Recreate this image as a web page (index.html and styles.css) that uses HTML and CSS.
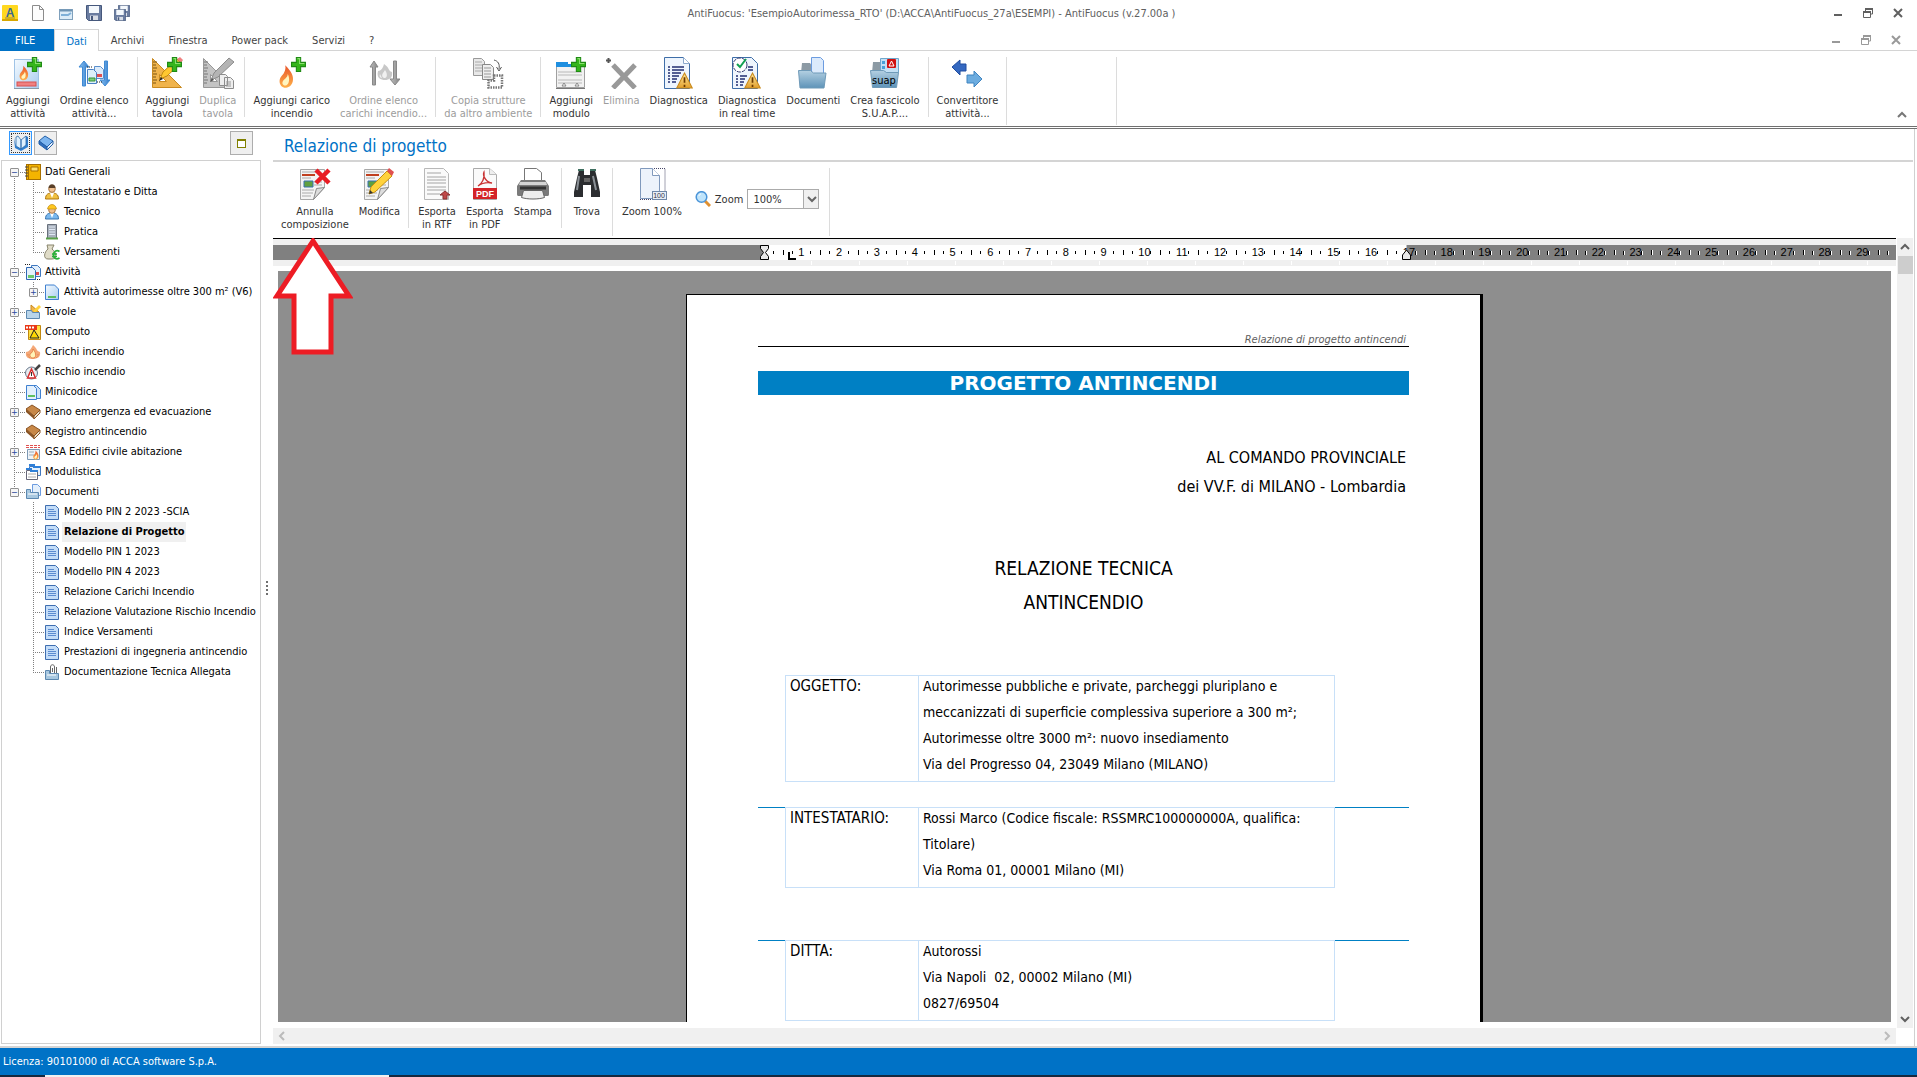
FILE: index.html
```html
<!DOCTYPE html>
<html lang="it">
<head>
  <meta charset="UTF-8">
  <title>AntiFuocus</title>
  <meta name="viewport" content="width=device-width, initial-scale=1">
  <link rel="stylesheet" href="styles.css">
</head>
<body>

  <!-- Icone -->
  <svg class="sprite" aria-hidden="true">
    <defs>
      <linearGradient id="g-blue" x1="0" y1="0" x2="1" y2="1"><stop offset="0" stop-color="#f4faff"/><stop offset="1" stop-color="#a9cdf0"/></linearGradient>
      <linearGradient id="g-folder" x1="0" y1="0" x2="0" y2="1"><stop offset="0" stop-color="#b4d0e2"/><stop offset="1" stop-color="#5e93b8"/></linearGradient>
      <linearGradient id="g-gold" x1="0" y1="0" x2="0" y2="1"><stop offset="0" stop-color="#ffe9a0"/><stop offset="1" stop-color="#e2a02c"/></linearGradient>
      <linearGradient id="g-fire" x1="0" y1="0" x2="0" y2="1"><stop offset="0" stop-color="#e8542a"/><stop offset="1" stop-color="#ffb24a"/></linearGradient>
      <linearGradient id="g-arrow" x1="0" y1="0" x2="1" y2="0"><stop offset="0" stop-color="#8cc4f4"/><stop offset="1" stop-color="#2f78c8"/></linearGradient>
      <linearGradient id="g-gray" x1="0" y1="0" x2="1" y2="0"><stop offset="0" stop-color="#c0c0c0"/><stop offset="1" stop-color="#848484"/></linearGradient>
    </defs>

    <symbol id="plus" viewBox="0 0 14 14"><path d="M5 .5h4V5h4.500v4H9v4.500H5V9H.5V5H5z" fill="#35b51c" stroke="#1f8a14"/><path d="M6 1.500h2V6h4.500" fill="none" stroke="#8be070"/></symbol>
    <symbol id="warn" viewBox="0 0 16 16"><path d="M8 1l7.300 14H.7z" fill="url(#g-gold)" stroke="#c98a1c"/><path d="M8 5v5M8 12v2" stroke="#6b3a00" stroke-width="1.600"/></symbol>
    <symbol id="flame" viewBox="0 0 12 20"><path d="M5 1c5 5 7 9 6 13s-4 5-6 5-5-2-4.500-6C1 10 3 9 4 7c1-2 1.500-4 1-6z" fill="url(#g-fire)"/><path d="M7 8c2 4 1 8-1 9s-4-1-3-3 4-3 4-6z" fill="#fff6c0"/></symbol>

    <symbol id="i-add-activity" viewBox="0 0 32 32">
      <rect x="2.500" y="2.500" width="24" height="29" fill="url(#g-blue)" stroke="#9fc3e6"/><path d="M2 31.500h25" stroke="#8a9aa8"/>
      <rect x="5" y="25" width="19" height="4" fill="#f08080" stroke="#d85050"/><use href="#flame" x="7" y="8" width="10" height="16"/><use href="#plus" x="15" y="0" width="15" height="15"/>
    </symbol>
    <symbol id="i-sort-activity" viewBox="0 0 32 32">
      <path d="M4.500 29V10H1L6 4l5 6H7.500v19z" fill="url(#g-arrow)" stroke="#3f8ad4"/><path d="M26.500 4v19H22l5 6 5-6h-2.500V4z" fill="url(#g-arrow)" stroke="#3f8ad4"/>
      <path d="M9 10h6M17 25h7" stroke="#222" stroke-dasharray="1 1"/><path d="M16.500 9.500h6l3 3v9h-9z" fill="#dcebfa" stroke="#5a8fcc"/><path d="M18 17h6v3h-6z" fill="#e05050"/>
      <path d="M9.500 12.500h6l3 3v11h-9z" fill="#dcf0fa" stroke="#4a80c4"/><path d="M11 21h6v3h-6z" fill="#7bd07b" stroke="#389038"/>
    </symbol>
    <symbol id="i-add-table" viewBox="0 0 32 32">
      <path d="M1.500 1.500v29h29z" fill="#f0b44c" stroke="#c98a20"/><path d="M8.500 17.500v7h7z" fill="#fff" stroke="#c98a20"/><path d="M2 5h4M2 8h3M2 11h4M2 14h3M2 17h4M2 20h3M2 23h4M2 26h3" stroke="#7a5410"/>
      <path d="M9 22l3-7L26 2l4 4-14 13z" fill="#ffc830" stroke="#c08a10"/><path d="M26 2l3-2 3 3-2 3z" fill="#f08080"/><path d="M8 24l2-4 2 2z" fill="#222"/><use href="#plus" x="16" y="0" width="15" height="15"/>
    </symbol>
    <symbol id="i-dup-table" viewBox="0 0 32 32">
      <path d="M1.500 1.500v29h29z" fill="#c4c4c4" stroke="#989898"/><path d="M8.500 17.500v7h7z" fill="#fff" stroke="#989898"/><path d="M2 5h4M2 8h3M2 11h4M2 14h3M2 17h4M2 20h3M2 23h4M2 26h3" stroke="#777"/>
      <path d="M9 23l3-7L27 1l5 4-16 15z" fill="#b4b4b4" stroke="#8c8c8c"/><path d="M8 25l2-4 2 2z" fill="#555"/><path d="M17.500 17.500h6l2 2v9h-8zM22.500 20.500h6l3 3v8h-9z" fill="#eee" stroke="#8c8c8c"/><path d="M24 25h5M24 27h5M24 29h5" stroke="#999"/>
    </symbol>
    <symbol id="i-add-fire" viewBox="0 0 32 32"><use href="#flame" x="3" y="7" width="15" height="25"/><use href="#plus" x="15" y="0" width="15" height="15"/></symbol>
    <symbol id="i-sort-fire" viewBox="0 0 32 32">
      <path d="M4.500 28V10H2l4-6 4 6H7.500v18z" fill="url(#g-gray)" stroke="#888"/><path d="M25.500 4v18H22l5 6 5-6h-3.500V4z" fill="url(#g-gray)" stroke="#888"/>
      <path d="M16 7c6 4 4 7 8 8 1 6-3 8-7 8s-9-2-7-9c3 0 5-3 6-7z" fill="#c8c8c8"/><path d="M17 13c3 4 2 8 0 8s-4-2-2-5zM12 17c-1 2 0 4 2 4z" fill="#f0f0f0"/>
    </symbol>
    <symbol id="i-copy" viewBox="0 0 32 32">
      <path d="M1.500 1.500h8l3 3v14h-11z" fill="#e8e8e8" stroke="#999"/><path d="M3 5h7M3 8h7M3 11h7M3 14h7" stroke="#aaa"/><path d="M10.500 7.500h8l3 3v12h-11z" fill="#eee" stroke="#888"/><path d="M12 11h7M12 14h7M12 17h7M12 20h7" stroke="#999"/>
      <path d="M22 3c4 1 6 4 5 9M24.500 10l2.500 4 2.500-4" fill="none" stroke="#555"/><path d="M22 18.500h8v12H16.500v-7H22z" fill="none" stroke="#777" stroke-width="2.500" stroke-dasharray="1.500 1"/>
    </symbol>
    <symbol id="i-add-form" viewBox="0 0 32 32">
      <path d="M1.500 7.500h28v23h-28z" fill="#f2f2f2" stroke="#a0a0a0"/><path d="M1 5h12v2h17v3H1z" fill="#1f8fe0"/><path d="M3 15h24M3 18h24M3 23h24M3 26h24" stroke="#b8b8b8"/><path d="M7 29l2-3 2 3zM20 29l2-3 2 3z" fill="#fff" stroke="#888"/><path d="M1 31.500h29" stroke="#777"/>
      <use href="#plus" x="16" y="0" width="15" height="15"/>
    </symbol>
    <symbol id="i-delete" viewBox="0 0 32 32"><path d="M1 3.500h5M3.500 1v5" stroke="#555" stroke-width="2"/><path d="M8 8l22 23M30 8L8 31" stroke="#999" stroke-width="5"/></symbol>
    <symbol id="i-diag" viewBox="0 0 32 32">
      <path d="M1.500.5h19l6 6v25h-25z" fill="#eef5fd" stroke="#3f6ea8"/><path d="M20.500.5v6h6" fill="#fff" stroke="#8aa8cc"/><path d="M5 10h2M5 13h2M5 16h2M5 19h2M5 22h2M5 25h2M9 10h12M9 13h12M9 16h9M9 19h7M9 22h5M9 25h4" stroke="#222e70" stroke-width="1.300"/><use href="#warn" x="13" y="15" width="17" height="17"/>
    </symbol>
    <symbol id="i-diag-rt" viewBox="0 0 32 32">
      <path d="M1.500.5h19l6 6v25h-25z" fill="#eef5fd" stroke="#3f6ea8"/><path d="M5 19h2M5 22h2M5 25h2M5 28h2M17 10h5M17 13h5M9 19h7M9 22h5M9 25h4M9 28h3" stroke="#222e70" stroke-width="1.300"/>
      <circle cx="9" cy="8" r="7" fill="#fff" stroke="#333c70" stroke-dasharray="4 1"/><path d="M6 7l3 3 6-8" fill="none" stroke="#12a050" stroke-width="2"/><use href="#warn" x="13" y="15" width="17" height="17"/>
    </symbol>
    <symbol id="i-docs" viewBox="0 0 32 32">
      <path d="M4 16l1-10h8l2 3v7z" fill="#8c9aa4"/><path d="M14.500.5h9l3 3v16h-12z" fill="#dceafb" stroke="#6c9ce0"/><path d="M1.500 13.500h12l3 2.500h12.500l-2 15h-24z" fill="url(#g-folder)" stroke="#6f9ab8"/>
    </symbol>
    <symbol id="i-suap" viewBox="0 0 32 32">
      <path d="M3 16l1-11h8v11z" fill="#8c9aa4"/><path d="M11.500 1.500h18v14h-18z" fill="#c4e0f4" stroke="#6fa6cc"/><path d="M13 4h3v3h-3zM13 9h3v3h-3z" fill="#4aa0d8"/><rect x="18" y="2" width="9" height="9" rx="1" fill="#d01010"/><path d="M20 9l2.500-5L25 9z" fill="none" stroke="#fff"/>
      <path d="M1.500 13.500h13l3 2h12l-2 15h-24z" fill="url(#g-folder)" stroke="#6f9ab8"/>
    </symbol>
    <symbol id="i-convert" viewBox="0 0 32 32"><path d="M1 10l8-7v4h6v7H9v4z" fill="#3468c0" stroke="#1f4ca0"/><path d="M31 22l-8-8v4h-7v8h7v4z" fill="#6cacdf" stroke="#3f84c0"/></symbol>

    <!-- barra del documento -->
    <symbol id="sheet-news" viewBox="0 0 32 32"><path d="M1.500 1.500h24v18l-11 12h-13z" fill="#f4f4f4" stroke="#a8a8a8"/><path d="M3 4h18M3 7h9M3 10h9M15 14h8M15 17h8M3 22h12M3 25h11M3 28h9" stroke="#aaa"/><path d="M3 7h13" stroke="#c04020" stroke-width="2"/><path d="M5 13h9v6H5z" fill="#60a040" stroke="#3870b0"/><path d="M14.500 31.500l3-11 8-1z" fill="#ddd" stroke="#888"/></symbol>
    <symbol id="i-cancel" viewBox="0 0 32 32"><use href="#sheet-news" x="0" y="0" width="32" height="32"/><path d="M17 2l13 13M30 2L17 15" stroke="#e81c24" stroke-width="4.500"/></symbol>
    <symbol id="i-edit" viewBox="0 0 32 32"><use href="#sheet-news" x="0" y="0" width="32" height="32"/><path d="M6 26l2-7L24 3l5 5-17 16z" fill="#ffd23c" stroke="#c89010"/><path d="M24 3l2-3 5 4-2 4z" fill="#e05050"/><path d="M6 26l1-4 3 3z" fill="#333"/></symbol>
    <symbol id="i-rtf" viewBox="0 0 32 32"><path d="M3.500.5h19l5 5v26h-24z" fill="#fafafa" stroke="#b8b8b8"/><path d="M6 5h14M6 9h19M6 12h19M6 15h19M6 19h19M6 22h19M6 26h13" stroke="#a4a4a4"/><path d="M24 23l5 4h-3v4h-4v-4h-3z" fill="#c04848" stroke="#883030"/></symbol>
    <symbol id="i-pdf" viewBox="0 0 32 32"><path d="M4.500.5h16l7 6v25h-23z" fill="#fafafa" stroke="#aaa"/><path d="M20.500.5v6h7" fill="#eee" stroke="#bbb"/><rect x="4" y="20" width="24" height="11" fill="#d42428"/><path d="M9 18c4-2 7-8 6-14-2 4 3 11 8 11-5-1-10 0-14 3z" fill="none" stroke="#c83030" stroke-width="1.300"/></symbol>
    <symbol id="i-print" viewBox="0 0 32 32"><path d="M7.500 14V.5h12l5 4V14z" fill="#fff" stroke="#777"/><path d="M4 12h24l4 6v8c0 2-1 2-2 2H2c-1 0-2 0-2-2v-8z" fill="#7a7a7a"/><path d="M3 14h26l1 3H2z" fill="#d4d4d4"/><path d="M3 20h26" stroke="#333" stroke-width="3"/><path d="M6.500 22.500h19l2 7c-6 2-17 2-23 0z" fill="#eee" stroke="#666"/></symbol>
    <symbol id="i-find" viewBox="0 0 32 32"><path d="M8 2h5v5h6V2h5l2 8 3 14v5h-9V17h-8v12H3v-5L6 10z" fill="#2b2d30"/><path d="M8 8l-2 14M22 8l3 14" stroke="#8a9096" stroke-width="2"/><path d="M7 2h6M19 2h6" stroke="#3f6f60" stroke-width="2"/><path d="M13 10h6v4h-6z" fill="#666"/></symbol>
    <symbol id="i-zoom100" viewBox="0 0 32 32"><path d="M4.500.5h12l7 7v23h-19z" fill="#edf3fb" stroke="#8099bc"/><path d="M16.500.5v7h7" fill="#fff" stroke="#8099bc"/><path d="M18 .5h11V24M4 31.500h12" fill="none" stroke="#446" stroke-dasharray="1 1"/><rect x="16.500" y="23.500" width="14" height="8" fill="#e8eef6" stroke="#7088a8"/></symbol>
    <symbol id="i-lens" viewBox="0 0 16 16"><path d="M10 10l5 5" stroke="#e09030" stroke-width="3"/><circle cx="6.500" cy="6" r="5.300" fill="#bfe4fb" stroke="#4a94d8" stroke-width="1.500"/><path d="M4 5c0-1 1-2 2-2" stroke="#fff" fill="none"/></symbol>

    <!-- barra del titolo -->
    <symbol id="q-app" viewBox="0 0 16 16"><rect width="16" height="16" rx="1" fill="#ffd820"/><path d="M0 14h16v2H0z" fill="#d8a800"/><path d="M3 13h10" stroke="#a08a30"/></symbol>
    <symbol id="q-new" viewBox="0 0 16 16"><path d="M2.500.5h7l4 4v11h-11z" fill="#fdfdfd" stroke="#8c8c8c"/><path d="M9.500.5v4h4" fill="none" stroke="#8c8c8c"/></symbol>
    <symbol id="q-open" viewBox="0 0 16 16"><rect x="1.500" y="4.500" width="13" height="10" fill="#dcecf8" stroke="#7fa0bc"/><path d="M2 5.500h12" stroke="#6e94b4" stroke-width="2"/><path d="M3 10h7l3-2" fill="none" stroke="#7fb0d8" stroke-width="2"/></symbol>
    <symbol id="q-save" viewBox="0 0 16 16"><path d="M.5.5h15v15h-13l-2-2z" fill="#6a7ca0" stroke="#46587c"/><path d="M3 1h10v7H3z" fill="#f4f8fc"/><path d="M4 10.500h8V15H4z" fill="#d8dde6"/><path d="M5 11h2v4H5z" fill="#46587c"/></symbol>
    <symbol id="q-save-all" viewBox="0 0 16 16"><use href="#q-save" x="4" y="0" width="12" height="12"/><use href="#q-save" x="0" y="4" width="12" height="12"/></symbol>
    <symbol id="w-min" viewBox="0 0 10 10"><path d="M1 7h8" stroke="currentColor" stroke-width="2"/></symbol>
    <symbol id="w-restore" viewBox="0 0 10 10"><path d="M2.500 3V1h7v5H8M.5 4h7v5.500h-7z" fill="none" stroke="currentColor"/><path d="M2 1h8M0 4h8" stroke="currentColor" stroke-width="2"/></symbol>
    <symbol id="w-close" viewBox="0 0 10 10"><path d="M1 1l8 8M9 1L1 9" stroke="currentColor" stroke-width="2"/></symbol>
    <symbol id="c-up" viewBox="0 0 10 10"><path d="M1 7l4-4 4 4" fill="none" stroke="currentColor" stroke-width="2"/></symbol>
    <symbol id="c-down" viewBox="0 0 10 10"><path d="M1 3l4 4 4-4" fill="none" stroke="currentColor" stroke-width="2"/></symbol>
    <symbol id="c-left" viewBox="0 0 10 10"><path d="M7 1L3 5l4 4" fill="none" stroke="currentColor" stroke-width="2"/></symbol>
    <symbol id="c-right" viewBox="0 0 10 10"><path d="M3 1l4 4-4 4" fill="none" stroke="currentColor" stroke-width="2"/></symbol>

    <!-- albero -->
    <symbol id="t-open-book" viewBox="0 0 16 16"><path d="M1 3l1 10 6 3 7-4V2l-2-1v9l-5 3-5-2z" fill="#2f7fd0"/><path d="M3 2l2-1 3 4v9l-5-3zM8 5l5-4v9l-5 4z" fill="#dff0fd" stroke="#2868a8" stroke-width=".8"/></symbol>
    <symbol id="t-book" viewBox="0 0 16 16"><path d="M1 6l6-5 8 5-6 6z" fill="#7db6f0" stroke="#2460a8"/><path d="M1 6v3l8 6v-3z" fill="#2f6fc0" stroke="#2460a8"/><path d="M9 12v3l6-6V6z" fill="#e8f2fc" stroke="#2460a8"/></symbol>
    <symbol id="t-general" viewBox="0 0 16 16"><rect x="1.500" y=".5" width="14" height="15" fill="#f4b400" stroke="#a87000"/><path d="M3.500 1v14" stroke="#a87000"/><path d="M6 3h7v4H6z" fill="#ffe070" stroke="#a87000"/><path d="M0 3h3M0 6h3M0 9h3M0 12h3" stroke="#444"/></symbol>
    <symbol id="t-person" viewBox="0 0 16 16"><path d="M1.500 15c0-5 3-6 6.500-6s6.500 1 6.500 6z" fill="#f0c040" stroke="#b07810"/><path d="M6 9l2 5 2-5z" fill="#fff"/><circle cx="8" cy="5" r="3.300" fill="#f0c090" stroke="#a87848"/><path d="M4.500 4c0-5 7-5 7 0z" fill="#5a4028"/></symbol>
    <symbol id="t-tech" viewBox="0 0 16 16"><path d="M1.500 15c0-5 3-6 6.500-6s6.500 1 6.500 6z" fill="#7ab8ee" stroke="#3874b0"/><path d="M6 9l2 5 2-5z" fill="#fff"/><circle cx="8" cy="6" r="3.300" fill="#f0c090" stroke="#a87848"/><path d="M3.500 5c1-6 8-6 9 0z" fill="#ffc820" stroke="#c08a10" stroke-width=".7"/></symbol>
    <symbol id="t-building" viewBox="0 0 16 16"><path d="M3.500.5h9v14h-9z" fill="#a8b0bc" stroke="#68707c"/><path d="M5 3h6M5 5.500h6M5 8h6M5 10.500h6" stroke="#dfe8f4"/><path d="M2 14.500h12" stroke="#58a048" stroke-width="2"/></symbol>
    <symbol id="t-money" viewBox="0 0 16 16"><path d="M3 1h7L8 5c5 4 5 10 0 10H4C-1 15 0 8 4 5z" fill="#e0dcc8" stroke="#88846c"/><path d="M15.500 7.500c-3-2-6 0-6 3.500s3 5 6 3M8 10h5M8 12.500h5" fill="none" stroke="#28b038" stroke-width="1.700"/></symbol>
    <symbol id="t-activity" viewBox="0 0 16 16"><path d="M0 .5h6M10 15.500h6" stroke="#222" stroke-dasharray="1 1"/><path d="M6.500 1.500h6l3 3v8h-9z" fill="#e4f0fc" stroke="#3f78c0"/><path d="M11 8h3v3h-3z" fill="#e05050"/><path d="M1.500 3.500h6l3 3v9h-9z" fill="#e4f0fc" stroke="#2f68b4"/><path d="M3 11h6v3H3z" fill="#6cc86c"/></symbol>
    <symbol id="t-sheet" viewBox="0 0 16 16"><path d="M1.500 1h9l4 4v10.500h-13z" fill="url(#g-blue)" stroke="#3f80d0"/><path d="M4 12h8v2H4z" fill="#60c060"/></symbol>
    <symbol id="t-tables" viewBox="0 0 16 16"><path d="M6 1v7h8z" fill="#f0b44c" stroke="#c98a20"/><path d="M8 7l6-6 2 2-6 6z" fill="#ffd23c"/><path d="M1.500 6.500h5l1 2h7v6h-13z" fill="#b8d4ea" stroke="#5c88b0"/></symbol>
    <symbol id="t-calc" viewBox="0 0 16 16"><path d="M3.500 1.500h12v14h-12z" fill="#ffe040" stroke="#c08810"/><path d="M0 1h12v5H0z" fill="#e83818"/><path d="M1 3.500h9" stroke="#fff" stroke-width="2" stroke-dasharray="2 1"/><path d="M9 6l-4 8h9z" fill="#ffd800" stroke="#222"/></symbol>
    <symbol id="t-fire" viewBox="0 0 16 16"><path d="M8 1c5 4 3 6 7 7 1 5-3 7-7 7s-8-1-7-7c3 0 5-3 7-7z" fill="#f4a878"/><path d="M8 5c4 5 3 9 0 9s-4-3-2-5c1 0 2-2 2-4zM3 10c0 2 1 3 2 4M13 10c0 2-1 3-2 4" fill="#fff4b8" stroke="#e07030" stroke-width=".7"/></symbol>
    <symbol id="t-risk" viewBox="0 0 16 16"><circle cx="6.500" cy="9" r="6" fill="#e8ecf0" stroke="#68788c"/><path d="M6.500 5l-4 9h8z" fill="#fff" stroke="#d83030" stroke-width="1.500"/><path d="M6.500 8v4" stroke="#333"/><path d="M10 6l5-5" stroke="#444" stroke-width="2.500"/></symbol>
    <symbol id="t-mini" viewBox="0 0 16 16"><path d="M6.500 1.500h5l4 4v9h-9z" fill="#cfe2f8" stroke="#3f80d0"/><path d="M1.500 1.500h7l3 3v11h-10z" fill="#e4f0fc" stroke="#3f80d0"/><path d="M3 11h7v2H3z" fill="#60c060"/></symbol>
    <symbol id="t-brown" viewBox="0 0 16 16"><path d="M1 5l6-4 8 5-6 6z" fill="#c88848" stroke="#8a5424"/><path d="M1 5v3l8 7v-3z" fill="#8a5424"/><path d="M9 12v3l6-6V6z" fill="#efe0c8" stroke="#8a5424"/></symbol>
    <symbol id="t-gsa" viewBox="0 0 16 16"><path d="M2.500 5.500h12v10h-12z" fill="#eef3f8" stroke="#7c98b4"/><path d="M4 8h5M4 11h5" stroke="#9ab"/><path d="M1 1.500h14M1 3.500h14" stroke="#e05050" stroke-dasharray="3 1"/><use href="#flame" x="7" y="6" width="8" height="10"/></symbol>
    <symbol id="t-forms" viewBox="0 0 16 16"><path d="M4.500 2.500h11v9h-11z" fill="#e4f0fc" stroke="#3f78c0"/><path d="M4 1h5v2h7" fill="none" stroke="#2f80d8" stroke-width="2"/><path d="M1.500 6.500h11v9h-11z" fill="#fff" stroke="#667"/><path d="M1 5h5v2h7" fill="none" stroke="#2f80d8" stroke-width="2"/><path d="M3 10h8M3 13h8" stroke="#aaa"/></symbol>
    <symbol id="t-docs" viewBox="0 0 16 16"><path d="M7.500.5h5l3 3v8h-8z" fill="#e4f0fc" stroke="#6c9ce0"/><path d="M1.500 5.500h4v3h8v6h-12z" fill="#a8c8e0" stroke="#5c88b0"/><path d="M3 10h9" stroke="#fff"/></symbol>
    <symbol id="t-doc" viewBox="0 0 16 16"><path d="M1.500 1.500h10l3 3v11h-13z" fill="#c4ddf8" stroke="#3f6eb0"/><path d="M4 5.500h6M4 7.500h8M4 9.500h8M4 11.500h8" stroke="#5c8cd0"/></symbol>
    <symbol id="t-attach" viewBox="0 0 16 16"><path d="M1.500 6.500h4v3h9v6h-13z" fill="#a8c8e0" stroke="#5c88b0"/><path d="M3 11h9" stroke="#fff"/><path d="M6.500 9V3c0-3 4-3 4 0v6M8.500 8V4M12.500 9V3" fill="none" stroke="#666"/></symbol>
  </svg>

  <header class="title-bar">
    <div class="quick-access">
      <button class="icon-btn" aria-label="AntiFuocus"><svg class="icon16" viewBox="0 0 16 16"><use href="#q-app"/><text x="8" y="12" text-anchor="middle" class="app-letter">A</text></svg></button>
      <button class="icon-btn" aria-label="Nuovo"><svg class="icon16"><use href="#q-new"/></svg></button>
      <button class="icon-btn" aria-label="Apri"><svg class="icon16"><use href="#q-open"/></svg></button>
      <button class="icon-btn" aria-label="Salva"><svg class="icon16"><use href="#q-save"/></svg></button>
      <button class="icon-btn" aria-label="Salva tutto"><svg class="icon16"><use href="#q-save-all"/></svg></button>
    </div>
    <div class="window-title">AntiFuocus: 'EsempioAutorimessa_RTO' (D:\ACCA\AntiFuocus_27a\ESEMPI) - AntiFuocus (v.27.00a )</div>
    <div class="window-controls">
      <button class="icon-btn" aria-label="Riduci a icona"><svg class="icon10"><use href="#w-min"/></svg></button>
      <button class="icon-btn" aria-label="Ripristina"><svg class="icon10"><use href="#w-restore"/></svg></button>
      <button class="icon-btn" aria-label="Chiudi"><svg class="icon10"><use href="#w-close"/></svg></button>
    </div>
  </header>

  <nav class="tab-bar">
    <button class="tab tab-file">FILE</button>
    <button class="tab tab-active">Dati</button>
    <button class="tab">Archivi</button>
    <button class="tab">Finestra</button>
    <button class="tab">Power pack</button>
    <button class="tab">Servizi</button>
    <button class="tab">?</button>
    <div class="window-controls child-controls">
      <button class="icon-btn" aria-label="Riduci documento"><svg class="icon10"><use href="#w-min"/></svg></button>
      <button class="icon-btn" aria-label="Ripristina documento"><svg class="icon10"><use href="#w-restore"/></svg></button>
      <button class="icon-btn" aria-label="Chiudi documento"><svg class="icon10"><use href="#w-close"/></svg></button>
    </div>
  </nav>

  <!-- Barra multifunzione -->
  <div class="ribbon">
    <div class="group">
      <button class="tool"><svg class="icon32"><use href="#i-add-activity"/></svg>Aggiungi<br>attività</button>
      <button class="tool"><svg class="icon32"><use href="#i-sort-activity"/></svg>Ordine elenco<br>attività...</button>
    </div>
    <div class="group">
      <button class="tool"><svg class="icon32"><use href="#i-add-table"/></svg>Aggiungi<br>tavola</button>
      <button class="tool" disabled><svg class="icon32"><use href="#i-dup-table"/></svg>Duplica<br>tavola</button>
    </div>
    <div class="group">
      <button class="tool"><svg class="icon32"><use href="#i-add-fire"/></svg>Aggiungi carico<br>incendio</button>
      <button class="tool" disabled><svg class="icon32"><use href="#i-sort-fire"/></svg>Ordine elenco<br>carichi incendio...</button>
    </div>
    <div class="group">
      <button class="tool" disabled><svg class="icon32"><use href="#i-copy"/></svg>Copia strutture<br>da altro ambiente</button>
    </div>
    <div class="group">
      <button class="tool"><svg class="icon32"><use href="#i-add-form"/></svg>Aggiungi<br>modulo</button>
      <button class="tool" disabled><svg class="icon32"><use href="#i-delete"/></svg>Elimina</button>
      <button class="tool"><svg class="icon32"><use href="#i-diag"/></svg>Diagnostica</button>
      <button class="tool"><svg class="icon32"><use href="#i-diag-rt"/></svg>Diagnostica<br>in real time</button>
      <button class="tool"><svg class="icon32"><use href="#i-docs"/></svg>Documenti</button>
      <button class="tool"><svg class="icon32" viewBox="0 0 32 32"><use href="#i-suap"/><text x="15" y="27" text-anchor="middle" class="suap">suap</text></svg>Crea fascicolo<br>S.U.A.P....</button>
    </div>
    <div class="group group-end">
      <button class="tool"><svg class="icon32"><use href="#i-convert"/></svg>Convertitore<br>attività...</button>
    </div>
    <div class="group group-end group-empty"></div>
    <button class="icon-btn ribbon-collapse" aria-label="Comprimi barra"><svg class="icon10"><use href="#c-up"/></svg></button>
  </div>

  <div class="workspace">
    <aside class="sidebar">
      <div class="sidebar-bar">
        <button class="square square-on" aria-label="Vista struttura"><svg class="icon16"><use href="#t-open-book"/></svg></button>
        <button class="square" aria-label="Vista archivio"><svg class="icon16"><use href="#t-book"/></svg></button>
        <button class="square square-last" aria-label="Pannello"><span class="mini-window"></span></button>
      </div>
      <ul class="tree">
        <li><div class="row"><button class="toggle" aria-label="Comprimi">−</button><svg class="icon16"><use href="#t-general"/></svg><a href="#">Dati Generali</a></div>
          <ul>
            <li><div class="row"><svg class="icon16"><use href="#t-person"/></svg><a href="#">Intestatario e Ditta</a></div></li>
            <li><div class="row"><svg class="icon16"><use href="#t-tech"/></svg><a href="#">Tecnico</a></div></li>
            <li><div class="row"><svg class="icon16"><use href="#t-building"/></svg><a href="#">Pratica</a></div></li>
            <li><div class="row"><svg class="icon16"><use href="#t-money"/></svg><a href="#">Versamenti</a></div></li>
          </ul>
        </li>
        <li><div class="row"><button class="toggle" aria-label="Comprimi">−</button><svg class="icon16"><use href="#t-activity"/></svg><a href="#">Attività</a></div>
          <ul>
            <li><div class="row"><button class="toggle" aria-label="Espandi">+</button><svg class="icon16"><use href="#t-sheet"/></svg><a href="#">Attività autorimesse oltre 300 m² (V6)</a></div></li>
          </ul>
        </li>
        <li><div class="row"><button class="toggle" aria-label="Espandi">+</button><svg class="icon16"><use href="#t-tables"/></svg><a href="#">Tavole</a></div></li>
        <li><div class="row"><svg class="icon16"><use href="#t-calc"/></svg><a href="#">Computo</a></div></li>
        <li><div class="row"><svg class="icon16"><use href="#t-fire"/></svg><a href="#">Carichi incendio</a></div></li>
        <li><div class="row"><svg class="icon16"><use href="#t-risk"/></svg><a href="#">Rischio incendio</a></div></li>
        <li><div class="row"><svg class="icon16"><use href="#t-mini"/></svg><a href="#">Minicodice</a></div></li>
        <li><div class="row"><button class="toggle" aria-label="Espandi">+</button><svg class="icon16"><use href="#t-brown"/></svg><a href="#">Piano emergenza ed evacuazione</a></div></li>
        <li><div class="row"><svg class="icon16"><use href="#t-brown"/></svg><a href="#">Registro antincendio</a></div></li>
        <li><div class="row"><button class="toggle" aria-label="Espandi">+</button><svg class="icon16"><use href="#t-gsa"/></svg><a href="#">GSA Edifici civile abitazione</a></div></li>
        <li><div class="row"><svg class="icon16"><use href="#t-forms"/></svg><a href="#">Modulistica</a></div></li>
        <li><div class="row"><button class="toggle" aria-label="Comprimi">−</button><svg class="icon16"><use href="#t-docs"/></svg><a href="#">Documenti</a></div>
          <ul>
            <li><div class="row"><svg class="icon16"><use href="#t-doc"/></svg><a href="#">Modello PIN 2 2023 -SCIA</a></div></li>
            <li><div class="row"><svg class="icon16"><use href="#t-doc"/></svg><a href="#" class="current">Relazione di Progetto</a></div></li>
            <li><div class="row"><svg class="icon16"><use href="#t-doc"/></svg><a href="#">Modello PIN 1 2023</a></div></li>
            <li><div class="row"><svg class="icon16"><use href="#t-doc"/></svg><a href="#">Modello PIN 4 2023</a></div></li>
            <li><div class="row"><svg class="icon16"><use href="#t-doc"/></svg><a href="#">Relazione Carichi Incendio</a></div></li>
            <li><div class="row"><svg class="icon16"><use href="#t-doc"/></svg><a href="#">Relazione Valutazione Rischio Incendio</a></div></li>
            <li><div class="row"><svg class="icon16"><use href="#t-doc"/></svg><a href="#">Indice Versamenti</a></div></li>
            <li><div class="row"><svg class="icon16"><use href="#t-doc"/></svg><a href="#">Prestazioni di ingegneria antincendio</a></div></li>
            <li><div class="row"><svg class="icon16"><use href="#t-attach"/></svg><a href="#">Documentazione Tecnica Allegata</a></div></li>
          </ul>
        </li>
      </ul>
    </aside>

    <div class="splitter"><span class="grip"></span></div>

    <main class="content">
      <h1 class="content-title">Relazione di progetto</h1>
      <div class="ribbon doc-bar">
        <div class="group">
          <button class="tool"><svg class="icon32"><use href="#i-cancel"/></svg>Annulla<br>composizione</button>
          <button class="tool"><svg class="icon32"><use href="#i-edit"/></svg>Modifica</button>
        </div>
        <div class="group">
          <button class="tool"><svg class="icon32"><use href="#i-rtf"/></svg>Esporta<br>in RTF</button>
          <button class="tool"><svg class="icon32" viewBox="0 0 32 32"><use href="#i-pdf"/><text x="16" y="29" text-anchor="middle" class="pdf">PDF</text></svg>Esporta<br>in PDF</button>
          <button class="tool"><svg class="icon32"><use href="#i-print"/></svg>Stampa</button>
        </div>
        <div class="group group-end">
          <button class="tool"><svg class="icon32"><use href="#i-find"/></svg>Trova</button>
        </div>
        <div class="group group-end">
          <button class="tool"><svg class="icon32" viewBox="0 0 32 32"><use href="#i-zoom100"/><text x="23" y="30" text-anchor="middle" class="hundred">100</text></svg>Zoom 100%</button>
          <div class="zoom-field">
            <svg class="icon16"><use href="#i-lens"/></svg>
            <label for="zoom">Zoom</label>
            <div class="zoom-box">
              <select id="zoom"><option>100%</option><option>75%</option><option>50%</option></select>
              <span class="zoom-arrow"><svg class="icon10"><use href="#c-down"/></svg></span>
            </div>
          </div>
        </div>
      </div>

      <div class="viewer">
        <div class="viewer-main">
          <div class="ruler-area">
            <div class="ruler">
              <div class="ruler-scale">
                <span class="cm"></span><span class="cm">1</span><span class="cm">2</span><span class="cm">3</span><span class="cm">4</span><span class="cm">5</span><span class="cm">6</span><span class="cm">7</span><span class="cm">8</span><span class="cm">9</span><span class="cm">10</span><span class="cm">11</span><span class="cm">12</span><span class="cm">13</span><span class="cm">14</span><span class="cm">15</span><span class="cm">16</span><span class="cm cm-out">17</span><span class="cm cm-out">18</span><span class="cm cm-out">19</span><span class="cm cm-out">20</span><span class="cm cm-out">21</span><span class="cm cm-out">22</span><span class="cm cm-out">23</span><span class="cm cm-out">24</span><span class="cm cm-out">25</span><span class="cm cm-out">26</span><span class="cm cm-out">27</span><span class="cm cm-out">28</span><span class="cm cm-out">29</span>
                <svg class="mark mark-left" viewBox="0 0 9 15"><path d="M.5.500h8v3l-3 4 3 4v3h-8v-3l3-4-3-4z" fill="#e8e8e8" stroke="#000"/></svg>
                <svg class="mark mark-tab" viewBox="0 0 8 8"><path d="M1 0v7h7" fill="none" stroke="#000" stroke-width="2"/></svg>
                <svg class="mark mark-right" viewBox="0 0 9 11"><path d="M4.500 1l4 5v4.500h-8V6z" fill="#e8e8e8" stroke="#000"/></svg>
              </div>
            </div>
            <div class="tab-stops"></div>
          </div>

          <div class="canvas">
            <article class="paper">
              <p class="page-head">Relazione di progetto antincendi</p>
              <h2 class="banner">PROGETTO ANTINCENDI</h2>
              <p class="recipient">AL COMANDO PROVINCIALE<br>dei VV.F. di MILANO - Lombardia</p>
              <h3 class="report-title">RELAZIONE TECNICA<br>ANTINCENDIO</h3>

              <div class="block">
                <table>
                  <tr>
                    <th><div>OGGETTO:</div></th>
                    <td><div>Autorimesse pubbliche e private, parcheggi pluriplano e<br>meccanizzati di superficie complessiva superiore a 300 m²;<br>Autorimesse oltre 3000 m²: nuovo insediamento<br>Via del Progresso 04, 23049 Milano (MILANO)</div></td>
                  </tr>
                </table>
              </div>
              <div class="block block-ruled">
                <table>
                  <tr>
                    <th><div>INTESTATARIO:</div></th>
                    <td><div>Rossi Marco (Codice fiscale: RSSMRC100000000A, qualifica:<br>Titolare)<br>Via Roma 01, 00001 Milano (MI)</div></td>
                  </tr>
                </table>
              </div>
              <div class="block block-ruled block-far">
                <table>
                  <tr>
                    <th><div>DITTA:</div></th>
                    <td><div>Autorossi<br>Via Napoli&nbsp; 02, 00002 Milano (MI)<br>0827/69504</div></td>
                  </tr>
                </table>
              </div>
            </article>
          </div>
        </div>

        <div class="scroll-v">
          <button class="icon-btn" aria-label="Su"><svg class="icon10"><use href="#c-up"/></svg></button>
          <span class="thumb"></span>
          <button class="icon-btn scroll-end" aria-label="Giù"><svg class="icon10"><use href="#c-down"/></svg></button>
        </div>

        <svg class="callout" viewBox="0 0 80 120" aria-hidden="true"><path d="M40 3L4 58h17v56h37V58h18z" fill="#fff" stroke="#ed1c24" stroke-width="5"/></svg>
      </div>

      <div class="scroll-h">
        <button class="icon-btn" aria-label="Sinistra"><svg class="icon10"><use href="#c-left"/></svg></button>
        <button class="icon-btn" aria-label="Destra"><svg class="icon10"><use href="#c-right"/></svg></button>
      </div>
    </main>
  </div>

  <footer class="status-bar">Licenza: 90101000 di ACCA software S.p.A.</footer>
  <div class="taskbar"></div>

</body>
</html>
```
FILE: styles.css
```css
* {
  box-sizing: border-box;
}

body {
  margin: 0;
  height: 100vh;
  display: flex;
  flex-direction: column;
  overflow: hidden;
  background: #fff;
  color: #000;
  font-family: "DejaVu Sans Condensed", "DejaVu Sans", sans-serif;
  font-size: 11px;
  line-height: 13px;
}

button, select {
  font: inherit;
  color: inherit;
}

button {
  padding: 0;
  border: 0;
  background: none;
}

svg {
  display: block;
  flex: none;
}

.sprite {
  position: absolute;
  width: 0;
  height: 0;
}

.icon10 { width: 10px; height: 10px; }
.icon16 { width: 16px; height: 16px; }
.icon32 { width: 32px; height: 32px; }

.suap {
  font-family: "DejaVu Sans Condensed", sans-serif;
  font-size: 11px;
}

.pdf {
  font-family: "Liberation Sans", sans-serif;
  font-size: 9px;
  font-weight: bold;
  fill: #fff;
}

.hundred {
  font-family: "Liberation Sans", sans-serif;
  font-size: 7px;
  fill: #334;
}

.app-letter {
  font-family: "Liberation Sans", sans-serif;
  font-size: 12px;
  font-weight: bold;
  fill: #3a6a94;
}

/* barra del titolo */
.title-bar {
  display: grid;
  grid-template-columns: 1fr auto 1fr;
  align-items: center;
  height: 29px;
  padding: 0 14px 3px 2px;
  color: #606060;
}

.quick-access {
  display: flex;
  gap: 12px;
}

.window-title {
  padding-right: 42px;
}

.window-controls {
  display: flex;
  gap: 20px;
  justify-content: flex-end;
}

.tab-bar {
  display: flex;
  height: 22px;
  border-bottom: 1px solid #d4d4d4;
  color: #444;
}

.tab {
  padding: 2px 12px 0;
}

.tab-file {
  height: 22px;
  padding: 0 19px 0 15px;
  background: #0072c6;
  color: #fff;
}

.tab-active {
  height: 22px;
  padding: 1px 11px 0;
  border: 1px solid #d4d4d4;
  border-bottom: 0;
  background: #fff;
  color: #0072c6;
}

.child-controls {
  flex: 1;
  align-items: center;
  padding-right: 16px;
  color: #999;
}

/* barra multifunzione */
.ribbon {
  display: flex;
  flex: none;
  height: 75px;
  padding: 6px 0 0 1px;
  color: #333;
}

.group {
  display: flex;
  height: 60px;
  padding: 0 3px;
  border-right: 1px solid #dcdcdc;
}

.group:first-child {
  padding-left: 0;
}

.group-end {
  height: 68px;
}

.group-empty {
  width: 110px;
}

.tool {
  display: flex;
  flex-direction: column;
  align-items: center;
  padding: 0 5px;
  white-space: nowrap;
}

.tool svg {
  margin-bottom: 5px;
}

.tool:disabled {
  color: #9c9c9c;
}

.ribbon-collapse {
  margin: 53px 10px 0 auto;
  align-self: flex-start;
  color: #777;
}

.workspace {
  flex: 1;
  min-height: 0;
  display: flex;
  padding-right: 2px;
  border-top: 3px double #707070;
  border-bottom: 2px solid #d4d4d4;
}

/* pannello laterale */
.sidebar {
  width: 261px;
  padding: 2px 0 2px 1px;
  display: flex;
  flex-direction: column;
}

.sidebar-bar {
  display: flex;
  gap: 2px;
  padding: 0 8px 5px;
}

.square {
  display: flex;
  align-items: center;
  justify-content: center;
  width: 23px;
  height: 24px;
  border: 1px solid #adadad;
  background: #efefef;
}

.square-on {
  border-color: #3399ff;
  outline: 1px dotted #333;
  outline-offset: -3px;
}

.square-last {
  margin-left: auto;
}

.mini-window {
  width: 9px;
  height: 9px;
  border: 1px solid #808000;
  border-top-width: 2px;
  background: #fff;
}

.tree {
  flex: 1;
  margin: 0;
  padding: 1px 0 0;
  border: 1px solid #d0d0d0;
  list-style: none;
}

.tree ul {
  margin: 0 0 0 19px;
  padding: 0;
  list-style: none;
}

.tree li {
  background: repeating-linear-gradient(#808080 0 1px, transparent 1px 2px) 12px 0 / 1px 100% no-repeat;
}

.tree li:last-child {
  background-size: 1px 10px;
}

.tree > li:first-child {
  background-position: 12px 10px;
}

.row {
  display: flex;
  align-items: center;
  height: 20px;
  padding-left: 23px;
  background: repeating-linear-gradient(90deg, #808080 0 1px, transparent 1px 2px) 12px 10px / 11px 1px no-repeat;
}

.row:has(.toggle) {
  padding-left: 8px;
}

.row a {
  padding: 0 2px;
  margin-left: 2px;
  line-height: 20px;
  color: #000;
  text-decoration: none;
  white-space: nowrap;
}

.row .current {
  background: #f0f0f0;
  font-weight: bold;
}

.toggle {
  width: 9px;
  height: 9px;
  margin-right: 6px;
  border: 1px solid #919191;
  border-radius: 1px;
  background: #f6f6f6;
  color: #2a4a9a;
  font-size: 9px;
  line-height: 7px;
}

.splitter {
  flex: none;
  width: 12px;
  display: flex;
  align-items: center;
  justify-content: center;
}

.grip {
  width: 2px;
  height: 14px;
  background: repeating-linear-gradient(#707070 0 2px, transparent 2px 4px);
}

/* area documento */
.content {
  flex: 1;
  min-width: 0;
  display: flex;
  flex-direction: column;
  padding-right: 1px;
  border-right: 1px solid #d0d0d0;
}

.content-title {
  margin: 0;
  padding: 7px 11px 4px;
  border-bottom: 2px solid #d4d4d4;
  color: #0072c6;
  font-size: 17px;
  line-height: 20px;
  font-weight: normal;
}

.doc-bar {
  height: 76px;
  padding-left: 3px;
}

.doc-bar .group + .group {
  padding: 0 4px;
}

.zoom-field {
  display: flex;
  align-items: center;
  gap: 4px;
  height: 62px;
  padding: 0 6px 0 8px;
}

.zoom-box {
  position: relative;
}

.zoom-box select {
  appearance: none;
  display: block;
  width: 72px;
  height: 20px;
  padding: 0 20px 0 5px;
  border: 1px solid #ababab;
  border-radius: 0;
  background: #fff;
}

.zoom-arrow {
  position: absolute;
  top: 1px;
  right: 1px;
  display: flex;
  align-items: center;
  width: 15px;
  height: 18px;
  padding-left: 3px;
  border-left: 1px solid #ababab;
  background: #f0f0f0;
  color: #666;
  pointer-events: none;
}

.viewer {
  position: relative;
  flex: 1;
  min-height: 0;
  display: flex;
}

.viewer-main {
  flex: 1;
  min-width: 0;
  display: flex;
  flex-direction: column;
}

.ruler-area {
  border-top: 1px solid #000;
  padding-top: 6px;
  background: #f0f0f0;
}

.ruler {
  height: 15px;
  padding-left: calc(50% - 321px);
  overflow: hidden;
  background: #808080;
}

.ruler-scale {
  position: relative;
  display: flex;
  height: 15px;
  background: linear-gradient(#fff, #fff) 0 0 / 17cm 15px no-repeat;
}

.cm {
  flex: none;
  width: 1cm;
  text-indent: -3px;
  font-family: "Liberation Sans", sans-serif;
  font-size: 11px;
  line-height: 15px;
  background:
    linear-gradient(#000, #000) 9px 6px / 1px 3px no-repeat,
    linear-gradient(#000, #000) 19px 5px / 1px 5px no-repeat,
    linear-gradient(#000, #000) 28px 6px / 1px 3px no-repeat;
}

.cm-out {
  background:
    linear-gradient(90deg, #000 50%, #fff 50%) 9px 6px / 2px 4px no-repeat,
    linear-gradient(90deg, #000 50%, #fff 50%) 19px 5px / 2px 5px no-repeat,
    linear-gradient(90deg, #000 50%, #fff 50%) 28px 6px / 2px 4px no-repeat;
}

.mark {
  position: absolute;
}

.mark-left {
  left: -4px;
  top: 0;
  width: 9px;
  height: 15px;
}

.mark-tab {
  left: 24px;
  top: 7px;
  width: 8px;
  height: 8px;
}

.mark-right {
  left: calc(17cm - 4px);
  top: 4px;
  width: 9px;
  height: 11px;
}

.tab-stops {
  height: 5px;
  margin: 1px 0 0 calc(50% - 321px);
  background: repeating-linear-gradient(90deg, transparent 0 47px, #fff 47px 48px) 0 0 / 100% 4px no-repeat;
}

.canvas {
  flex: 1;
  min-height: 0;
  margin: 5px 5px 6px;
  padding-top: 23px;
  overflow: hidden;
  background: #8e8e8e;
}

.paper {
  width: 797px;
  min-height: 29cm;
  margin: 0 auto;
  padding: 39px 71px;
  border: solid #000;
  border-width: 1px 3px 1px 1px;
  background: #fff;
  font-size: 16px;
}

.page-head {
  margin: 0;
  padding-right: 3px;
  border-bottom: 1px solid #000;
  color: #606060;
  font-size: 11px;
  font-style: italic;
  line-height: 12px;
  text-align: right;
}

.banner {
  margin: 24px 0 48px;
  background: #0080c4;
  color: #fff;
  font-family: "DejaVu Sans", sans-serif;
  font-size: 20px;
  line-height: 24px;
  text-align: center;
}

.recipient {
  margin: 0 3px 50px;
  line-height: 29px;
  text-align: right;
}

.report-title {
  margin: 0 0 56px;
  font-size: 19px;
  font-weight: normal;
  line-height: 34px;
  text-align: center;
}

.block {
  padding: 0 74px 0 27px;
}

.block-ruled {
  margin-top: 25px;
  border-top: 1px solid #0080c4;
}

.block-ruled table {
  margin-top: -1px;
}

.block-far {
  margin-top: 52px;
}

.block table {
  width: 100%;
  border-spacing: 0;
  table-layout: fixed;
  line-height: 26px;
}

.block th, .block td {
  padding: 0 4px;
  border: 1px solid #c8e0f8;
  background: #fff;
  font-size: 15px;
  font-weight: normal;
  text-align: left;
  vertical-align: top;
  white-space: nowrap;
}

.block td {
  border-left: 0;
  font-size: 14px;
}

.block th {
  width: 134px;
}

/* il testo sale verso il bordo superiore della cella */
.block td div, .block th div {
  margin: -3px 0 4px;
}

.scroll-v {
  flex: none;
  width: 16px;
  margin-left: 1px;
  display: flex;
  flex-direction: column;
  align-items: center;
  padding: 4px 0;
  background: #f0f0f0;
  color: #606060;
}

.thumb {
  width: 15px;
  height: 18px;
  margin-top: 4px;
  background: #cdcdcd;
}

.scroll-end {
  margin-top: auto;
}

.scroll-h {
  flex: none;
  display: flex;
  justify-content: space-between;
  align-items: center;
  height: 16px;
  margin: 0 17px 2px 0;
  padding: 0 4px;
  background: #f0f0f0;
  color: #bbb;
}

.callout {
  position: absolute;
  left: 0;
  top: 0;
  width: 80px;
  height: 120px;
}

.status-bar {
  flex: none;
  padding: 7px 3px;
  background: #0072c6;
  color: #fff;
}

.taskbar {
  flex: none;
  height: 2px;
  background: linear-gradient(90deg, #15293f 45px, #f0f0f0 45px 389px, #15293f 389px);
}
```
